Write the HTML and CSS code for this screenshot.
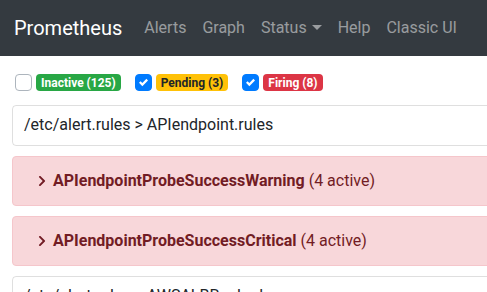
FILE: index.html
```html
<!DOCTYPE html>
<html>
<head>
<meta charset="utf-8">
<link rel="stylesheet" href="styles.css">
</head>
<body>
<nav class="navbar">
  <span class="brand">Prometheus</span>
  <ul class="nav">
    <li class="nav-link">Alerts</li>
    <li class="nav-link">Graph</li>
    <li class="nav-link">Status <span class="caret"></span></li>
    <li class="nav-link">Help</li>
    <li class="nav-link">Classic UI</li>
  </ul>
</nav>
<main class="container">
  <div class="filters">
    <label class="check">
      <span class="box"></span>
      <span class="badge badge-success">Inactive (125)</span>
    </label>
    <label class="check">
      <span class="box checked"><svg viewBox="0 0 8 8" width="9" height="9"><path d="M6.564.75l-3.59 3.612-1.538-1.55L0 4.26 2.974 7.25 8 2.193z" fill="#fff"/></svg></span>
      <span class="badge badge-warning">Pending (3)</span>
    </label>
    <label class="check">
      <span class="box checked"><svg viewBox="0 0 8 8" width="9" height="9"><path d="M6.564.75l-3.59 3.612-1.538-1.55L0 4.26 2.974 7.25 8 2.193z" fill="#fff"/></svg></span>
      <span class="badge badge-danger">Firing (8)</span>
    </label>
  </div>
  <div class="group-card">/etc/alert.rules &gt; APIendpoint.rules</div>
  <div class="alert">
    <svg class="chev" viewBox="0 0 320 512" width="8" height="12"><path fill="currentColor" d="M285.476 272.971L91.132 467.314c-9.373 9.373-24.569 9.373-33.941 0l-22.667-22.667c-9.357-9.357-9.375-24.522-.04-33.901L188.505 256 34.484 101.255c-9.335-9.379-9.317-24.544.04-33.901l22.667-22.667c9.373-9.373 24.569-9.373 33.941 0L285.475 239.03c9.373 9.372 9.373 24.568.001 33.941z"/></svg>
    <strong>APIendpointProbeSuccessWarning</strong> <span>(4 active)</span>
  </div>
  <div class="alert">
    <svg class="chev" viewBox="0 0 320 512" width="8" height="12"><path fill="currentColor" d="M285.476 272.971L91.132 467.314c-9.373 9.373-24.569 9.373-33.941 0l-22.667-22.667c-9.357-9.357-9.375-24.522-.04-33.901L188.505 256 34.484 101.255c-9.335-9.379-9.317-24.544.04-33.901l22.667-22.667c9.373-9.373 24.569-9.373 33.941 0L285.475 239.03c9.373 9.372 9.373 24.568.001 33.941z"/></svg>
    <strong>APIendpointProbeSuccessCritical</strong> <span>(4 active)</span>
  </div>
  <div class="group-card">/etc/alert.rules &gt; AWSALBRoel.rules</div>
</main>
</body>
</html>
```
FILE: styles.css
```css
* { box-sizing: border-box; }
html, body { margin: 0; padding: 0; overflow: hidden; }
body {
  font-family: Roboto, "Liberation Sans", sans-serif;
  font-size: 16px;
  line-height: 1.5;
  color: #212529;
  background: #fff;
  width: 487px;
  height: 292px;
}
.navbar {
  height: 56px;
  background: #343a40;
  display: flex;
  align-items: center;
  padding: 0 16px 0 14px;
}
.brand {
  color: #fff;
  font-size: 20px;
  line-height: 30px;
  margin-right: 16px;
}
.nav {
  list-style: none;
  margin: 0;
  padding: 0;
  display: flex;
  margin-left: -2px;
}
.nav-link {
  color: rgba(255,255,255,.5);
  padding: 8px;
  white-space: nowrap;
  display: flex;
  align-items: center;
}
.caret {
  display: inline-block;
  margin-left: 5px;
  border-top: 5px solid;
  border-left: 5px solid transparent;
  border-right: 5px solid transparent;
  margin-top: -2px;
}
.container {
  padding: 18px 0 0 12px;
  width: 1100px;
}
.filters {
  display: flex;
  align-items: center;
  gap: 14px;
  padding-left: 3px;
  height: 17px;
  margin-bottom: 14px;
}
.check {
  display: flex;
  align-items: center;
  gap: 4px;
}
.box {
  width: 17px;
  height: 17px;
  border: 1px solid #adb5bd;
  border-radius: 4px;
  background: #fff;
  display: flex;
  align-items: center;
  justify-content: center;
}
.box.checked {
  background: #007bff;
  border-color: #007bff;
}
.badge {
  display: inline-block;
  font-size: 12px;
  font-weight: 700;
  line-height: 1;
  padding: 3px 5px 2px;
  height: 17px;
  border-radius: 4px;
  white-space: nowrap;
}
.badge-success { background: #28a745; color: #fff; }
.badge-warning { background: #ffc107; color: #212529; }
.badge-danger { background: #dc3545; color: #fff; }
.group-card {
  border: 1px solid rgba(0,0,0,.125);
  border-radius: 4px;
  padding: 7px 11px;
  height: 41px;
  margin-bottom: 10px;
  white-space: nowrap;
}
.alert {
  background: #f8d7da;
  border: 1px solid #f5c6cb;
  color: #721c24;
  border-radius: 4px;
  padding: 12px 20px 12px 25px;
  height: 50px;
  margin-bottom: 10px;
  display: flex;
  align-items: center;
  white-space: nowrap;
}
.alert strong { font-weight: 700; margin-left: 7px; }
.alert span { margin-left: 4px; }
.chev { display: block; }
```
